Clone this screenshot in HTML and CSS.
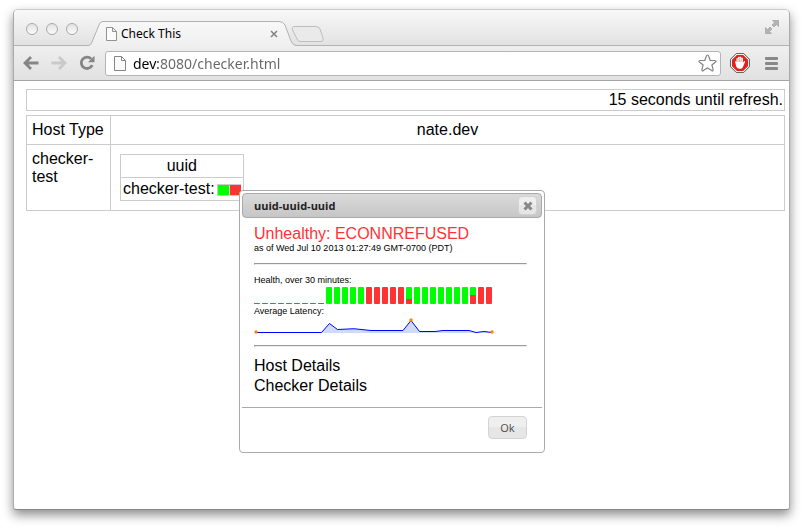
FILE: index.html
```html
<!DOCTYPE html>
<html lang="en">
<head>
<meta charset="utf-8">
<title>Check This</title>
<link rel="stylesheet" href="styles.css">
</head>
<body>
<div class="window">
  <header class="tabstrip">
    <div class="lights"><i></i><i></i><i></i></div>
    <div class="tab">
      <svg class="tab-shape" viewBox="0 0 208 25" preserveAspectRatio="none" aria-hidden="true">
        <defs><linearGradient id="tabfill" x1="0" y1="0" x2="0" y2="1"><stop offset="0" stop-color="#f8f8f8"/><stop offset="1" stop-color="#efefef"/></linearGradient></defs>
        <path d="M0 25V24.500C3 24 3 23 4 21L11 4Q12 .5 15 .5H191Q195 .5 197 4L203 20Q205 24.500 208 24.500V25Z" fill="url(#tabfill)"/>
        <path d="M0 24.500C3 24 3 23 4 21L11 4Q12 .5 15 .5H191Q195 .5 197 4L203 20Q205 24.500 208 24.500" fill="none" stroke="#b2b2b2"/>
      </svg>
      <svg class="page-icon" width="11" height="14" viewBox="0 0 11 14" aria-hidden="true"><path d="M.5.5H6.500L10.500 4.500V13.500H.5ZM6.500.5V4.500H10.500" fill="#fbfbfb" stroke="#929292"/></svg>
      <span class="tab-title">Check This</span>
      <button class="tab-close" aria-label="Close tab"><svg width="8" height="8" viewBox="0 0 8 8"><path d="M1 1L7 7M7 1L1 7" stroke="#858585" stroke-width="1.600"/></svg></button>
    </div>
    <button class="new-tab" aria-label="New tab"><svg width="34" height="17" viewBox="0 0 34 17"><path d="M4 .5H25Q28 .5 29 3L32 12Q33 15.500 30 15.500H10Q7 15.500 6 13L1.500 4Q0 .5 4 .5Z" fill="#eaeaea" stroke="#bdbdbd"/></svg></button>
    <button class="fullscreen" aria-label="Full screen"><svg width="16" height="16" viewBox="0 0 16 16" fill="#b4b4b4" stroke="#999" stroke-width=".6"><path d="M8.500 1.500H14.500V7.500L12.500 5.500L10 8L8 6L10.500 3.500Z"/><path d="M1.500 8.500L3.500 10.500L6 8L8 10L5.500 12.500L7.500 14.500H1.500Z"/></svg></button>
  </header>
  <nav class="toolbar">
    <button aria-label="Back"><svg width="16" height="14" viewBox="0 0 16 14" fill="none" stroke="#858585" stroke-width="2.800"><path d="M15.500 7H3M8 1L2 7L8 13"/></svg></button>
    <button aria-label="Forward"><svg width="16" height="14" viewBox="0 0 16 14" fill="none" stroke="#c9c9c9" stroke-width="2.800"><path d="M.5 7H13M8 1L14 7L8 13"/></svg></button>
    <button aria-label="Reload"><svg width="16" height="16" viewBox="0 0 16 16"><path d="M12.200 3.900A5.700 5.700 0 1 0 13.200 10.200" fill="none" stroke="#858585" stroke-width="2.800"/><path d="M15.500 .8V7.200H9Z" fill="#858585"/></svg></button>
    <div class="omnibox">
      <svg width="12" height="15" viewBox="0 0 12 15" aria-hidden="true"><path d="M.5.5H7.500L11.500 4.500V14.500H.5ZM7.500.5V4.500H11.500" fill="#fafafa" stroke="#858585"/></svg>
      <input type="text" aria-label="Address" value="dev:8080/checker.html">
      <button aria-label="Bookmark"><svg width="19" height="18" viewBox="0 0 19 18"><path d="M9.500 1Q10.300 1 10.700 2.200L12.200 6.300L17 6.500Q18.800 6.900 17.500 8L13.900 11L15.100 15.500Q15.300 17.400 13.700 16.600L9.500 14L5.300 16.600Q3.700 17.400 3.900 15.500L5.100 11L1.500 8Q.2 6.900 2 6.500L6.800 6.300L8.300 2.200Q8.700 1 9.500 1Z" fill="#fff" stroke="#838383" stroke-width="1.200"/></svg></button>
    </div>
    <button class="blocker" aria-label="Ad blocker"><svg width="20" height="20" viewBox="0 0 20 20"><path d="M6.200 .6H13.800L19.400 6.200V13.800L13.800 19.400H6.200L.6 13.800V6.200Z" fill="#fff" stroke="#555"/><path d="M6.800 2H13.200L18 6.800V13.200L13.200 18H6.800L2 13.200V6.800Z" fill="#e0231d"/><path d="M5 8.500Q6.100 7.800 6.500 9V5.500Q7.200 4.300 8 5.500V4.300Q8.800 3.100 9.600 4.300V4Q10.400 2.900 11.200 4.200V5Q12.300 4 12.900 5.300V9.700L13.900 8.200Q15.300 7.800 15 9L12.700 14.400Q12 15.700 10 15.700Q7.100 15.800 6.300 13.700Z" fill="#fff"/><path d="M8 5.500V9M9.600 5V9M11.200 5.500V9" stroke="#e0231d" stroke-width=".4"/></svg></button>
    <button class="menu" aria-label="Menu"><svg width="13" height="13" viewBox="0 0 13 13" fill="#888"><rect width="13" height="3" rx="1"/><rect y="5" width="13" height="3" rx="1"/><rect y="10" width="13" height="3" rx="1"/></svg></button>
  </nav>
  <main class="page">
    <div class="refresh">15 seconds until refresh.</div>
    <table class="hosts">
      <thead><tr><th scope="col" class="type">Host Type</th><th scope="col">nate.dev</th></tr></thead>
      <tbody><tr>
        <td class="type">checker-test</td>
        <td class="checks">
          <table class="check">
            <thead><tr><th scope="col">uuid</th></tr></thead>
            <tbody><tr><td>checker-test:<span class="status"><i class="ok"></i><i class="bad"></i></span></td></tr></tbody>
          </table>
        </td>
      </tr></tbody>
    </table>
    <section class="dialog" role="dialog" aria-labelledby="dialog-title">
      <header class="titlebar">
        <h2 id="dialog-title">uuid-uuid-uuid</h2>
        <button aria-label="Close"><svg width="10" height="10" viewBox="0 0 10 10"><path d="M1.500 1.500L8.500 8.500M8.500 1.500L1.500 8.500" stroke="#888" stroke-width="3"/></svg></button>
      </header>
      <div class="content">
        <p class="state">Unhealthy: ECONNREFUSED</p>
        <p class="note">as of Wed Jul 10 2013 01:27:49 GMT-0700 (PDT)</p>
        <hr>
        <p class="note">Health, over 30 minutes:</p>
        <div class="bars">
          <i class="none"></i><i class="none"></i><i class="none"></i><i class="none"></i><i class="none"></i><i class="none"></i><i class="none"></i><i class="none"></i><i class="none"></i>
          <i class="ok"></i><i class="ok"></i><i class="ok"></i><i class="ok"></i><i class="ok"></i>
          <i class="bad"></i><i class="bad"></i><i class="bad"></i><i class="bad"></i><i class="bad"></i>
          <i class="ok"><b style="height:5px"></b></i>
          <i class="ok"></i><i class="ok"></i><i class="ok"></i><i class="ok"></i><i class="ok"></i><i class="ok"></i><i class="ok"></i>
          <i class="ok"><b style="height:9px"></b></i>
          <i class="bad"></i><i class="bad"></i>
        </div>
        <p class="note">Average Latency:</p>
        <svg class="latency" width="241" height="18" viewBox="0 0 241 18" role="img" aria-label="Average latency">
          <path d="M2 15.500H67.500L75.500 6.500L83.500 12.500Q100 10.500 117 13.500H149L157 3.500L165.500 14.500H181L189 13.500H215L222 15.500L230 14.500L238 15.500V16H2Z" fill="#cddaf8"/>
          <path d="M2 15.500H67.500L75.500 6.500L83.500 12.500Q100 10.500 117 13.500H149L157 3.500L165.500 14.500H181L189 13.500H215L222 15.500L230 14.500L238 15.500" fill="none" stroke="#00f"/>
          <g fill="#ff8500"><circle cx="2" cy="15" r="1.700"/><circle cx="157" cy="3" r="1.700"/><circle cx="238" cy="15" r="1.700"/></g>
        </svg>
        <hr>
        <a href="#host">Host Details</a>
        <a href="#checker">Checker Details</a>
      </div>
      <footer class="buttons"><button>Ok</button></footer>
    </section>
  </main>
</div>
</body>
</html>
```
FILE: styles.css
```css
* { box-sizing: border-box; }
html, body { height: 100%; margin: 0; }
body {
  display: flex;
  padding: 9px 13px 19px;
  background: #fff;
  color: #000;
  font: 16px/18px "Liberation Sans", Arial, sans-serif;
}
button { display: flex; align-items: center; justify-content: center; padding: 0; border: 0; background: none; }
svg { display: block; flex: none; }
p, h2 { margin: 0; }

.window {
  flex: 1;
  display: flex;
  flex-direction: column;
  border: 1px solid #aaa;
  border-top-color: #ccc;
  border-bottom-color: #858885;
  border-radius: 5px 5px 3px 3px;
  background: #fff;
  box-shadow: 0 5px 11px rgba(0, 0, 0, .45);
}

.tabstrip {
  position: relative;
  display: flex;
  height: 36px;
  border-bottom: 1px solid #b2b2b2;
  border-radius: 4px 4px 0 0;
  background: linear-gradient(#f8f8f8, #e2e2e2);
}
.lights { display: flex; gap: 8px; padding: 13px 10px 0 12px; }
.lights i {
  width: 12px;
  height: 12px;
  border: 1px solid #a9a9a9;
  border-radius: 50%;
  background: linear-gradient(#e2e2e2, #fafafa);
}
.tab {
  position: relative;
  display: flex;
  align-items: center;
  width: 208px;
  height: 25px;
  margin-top: 11px;
  padding: 0 18px;
}
.tab-shape { position: absolute; inset: 0; width: 100%; height: 100%; }
.page-icon, .tab-title, .tab-close { position: relative; }
.tab-title { margin-left: 4px; font: 12px/16px "Noto Sans", sans-serif; }
.tab-close { margin-left: auto; }
.new-tab { align-self: flex-start; margin-top: 16px; margin-left: -5px; }
.fullscreen { align-self: flex-start; margin: 9px 9px 0 auto; }

.toolbar {
  display: flex;
  align-items: center;
  gap: 12px;
  height: 35px;
  padding: 0 11px 0 9px;
  border-bottom: 1px solid #a5a5a5;
  background: linear-gradient(#efefef, #e1e1e1);
}
.omnibox {
  flex: 1;
  display: flex;
  align-items: center;
  height: 25px;
  margin-left: -2px;
  padding: 0 3px 0 8px;
  border: 1px solid #b5b5b5;
  border-radius: 3px;
  background: #fff;
}
.omnibox input {
  flex: 1;
  min-width: 0;
  height: 22px;
  margin-left: 7px;
  padding: 0;
  border: 0;
  outline: 0;
  color: transparent;
  background: linear-gradient(90deg, #000 25px, #666 25px);
  background-clip: text;
  font: 14px/20px "Noto Sans", sans-serif;
}
.blocker { margin-left: -3px; }
.menu { margin-left: 3px; }

.page { position: relative; flex: 1; padding: 8px 4px 12px 12px; }
.refresh { padding: 1px; border: 1px solid #ccc; text-align: right; }
table { border-collapse: collapse; }
th { font-weight: normal; }
th, td { border: 1px solid #ccc; }
.hosts { width: 100%; margin-top: 4px; }
.hosts .type { width: 84px; padding: 5px; text-align: left; vertical-align: top; }
.hosts th { height: 29px; padding: 5px; }
.hosts .checks { padding: 9px; vertical-align: top; }
.check th, .check td { height: 23px; padding: 2px; }
.status { display: inline-flex; gap: 1px; margin-left: 2px; padding: 1px 0 1px 1px; background: #ccc; vertical-align: -1px; }
.status i { width: 11px; height: 10px; }
.ok { background: #0f0; }
.bad { background: #f33; }

.dialog {
  position: absolute;
  top: 109px;
  left: 225px;
  width: 306px;
  padding: 2px;
  border: 1px solid #aaa;
  border-radius: 4px;
  background: #fff;
}
.titlebar {
  display: flex;
  align-items: center;
  justify-content: space-between;
  height: 25px;
  padding: 0 4px 0 11px;
  border: 1px solid #aaa;
  border-radius: 4px;
  background: linear-gradient(#dadada, #c6c6c6);
}
.titlebar h2 { color: #222; font: bold 11px/16px "Open Sans", sans-serif; }
.titlebar button, .buttons button {
  border: 1px solid #d3d3d3;
  border-radius: 4px;
  background: linear-gradient(#efefef 50%, #e6e6e6 50%);
}
.titlebar button { width: 19px; height: 19px; }
.content { padding: 7px 15px 11px 12px; }
.state { color: #f33; line-height: 17px; }
.note { font-size: 9px; line-height: 12px; }
.content hr { margin: 9px 0; border: 1px solid #eee; border-top-color: #999; border-left-color: #999; }
.bars { display: flex; align-items: flex-end; gap: 2px; height: 17px; margin: 1px 0; }
.bars i { display: flex; align-items: flex-end; width: 6px; height: 17px; border-radius: 1px; }
.bars b { width: 6px; border-radius: 0 0 1px 1px; background: #f33; }
.bars .none { height: 1px; background: #f33; }
.latency { margin-bottom: 10px; }
.content a { display: block; color: #000; line-height: 20px; text-decoration: none; }
.buttons { display: flex; justify-content: flex-end; padding: 8px 15px 11px; border-top: 1px solid #aaa; }
.buttons button { width: 39px; height: 23px; color: #555; font: 11px/16px "Noto Sans", sans-serif; }
```
